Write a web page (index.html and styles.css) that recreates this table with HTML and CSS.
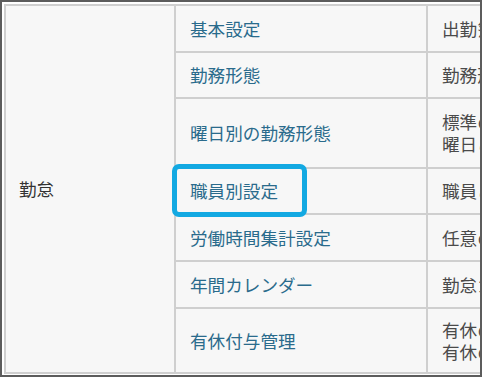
FILE: index.html
```html
<!DOCTYPE html>
<html lang="ja">
<head>
<meta charset="utf-8">
<title>設定メニュー</title>
<link rel="stylesheet" href="styles.css">
</head>
<body>
<div class="frame">
  <table class="menu">
    <colgroup>
      <col class="c-group">
      <col class="c-item">
      <col class="c-desc">
    </colgroup>
    <tbody>
      <tr class="r-47">
        <td class="group" rowspan="7">勤怠</td>
        <td class="item"><a href="#">基本設定</a></td>
        <td class="desc">出勤簿の基本的な設定を行います。</td>
      </tr>
      <tr class="r-46">
        <td class="item"><a href="#">勤務形態</a></td>
        <td class="desc">勤務形態の登録を行います。</td>
      </tr>
      <tr class="r-70">
        <td class="item"><a href="#">曜日別の勤務形態</a></td>
        <td class="desc">標準の勤務形態を設定します。<br>曜日ごとの勤務形態を設定します。</td>
      </tr>
      <tr class="r-46">
        <td class="item current"><a href="#">職員別設定</a><span class="mark"></span></td>
        <td class="desc">職員ごとの設定を行います。</td>
      </tr>
      <tr class="r-47">
        <td class="item"><a href="#">労働時間集計設定</a></td>
        <td class="desc">任意の期間で労働時間を集計します。</td>
      </tr>
      <tr class="r-47">
        <td class="item"><a href="#">年間カレンダー</a></td>
        <td class="desc">勤怠カレンダーを設定します。</td>
      </tr>
      <tr class="r-65">
        <td class="item"><a href="#">有休付与管理</a></td>
        <td class="desc">有休の付与日数を設定します。<br>有休の取得状況を管理します。</td>
      </tr>
    </tbody>
  </table>
</div>
</body>
</html>
```

FILE: styles.css
```css
* {
  box-sizing: border-box;
}

html, body {
  margin: 0;
  padding: 0;
  background: #ffffff;
}

.frame {
  width: 482px;
  height: 377px;
  border: 2px solid #5c5c5c;
  padding: 2px 0 0 2px;
  overflow: hidden;
  background: #ffffff;
}

.menu {
  table-layout: fixed;
  width: 724px;
  border-collapse: separate;
  border-spacing: 0;
  border-top: 2px solid #cfcfcf;
  border-left: 2px solid #cfcfcf;
  background: #f7f7f7;
  font-family: "Noto Sans CJK JP", "Noto Sans", sans-serif;
  font-size: 17.6px;
  line-height: 22px;
}

.c-group { width: 170px; }
.c-item { width: 252px; }
.c-desc { width: 302px; }

.menu td {
  border-right: 2px solid #cfcfcf;
  border-bottom: 2px solid #cfcfcf;
  vertical-align: middle;
  padding: 0 0 0 14px;
  white-space: nowrap;
}

.r-46 td { height: 46px; }
.r-47 td { height: 47px; }
.r-70 td { height: 70px; }
.r-65 td { height: 65px; }

.menu td.group {
  color: #333333;
  padding-left: 13px;
  height: auto;
}

.item a {
  color: #2a6b8c;
  text-decoration: none;
}

.desc {
  color: #4a4a4a;
}

.item.current {
  position: relative;
}

/* highlight ring drawn over the current entry */
.mark {
  position: absolute;
  left: -4px;
  top: -5px;
  width: 135px;
  height: 53px;
  border: 5px solid #13a9e2;
  border-radius: 7px;
}
```
